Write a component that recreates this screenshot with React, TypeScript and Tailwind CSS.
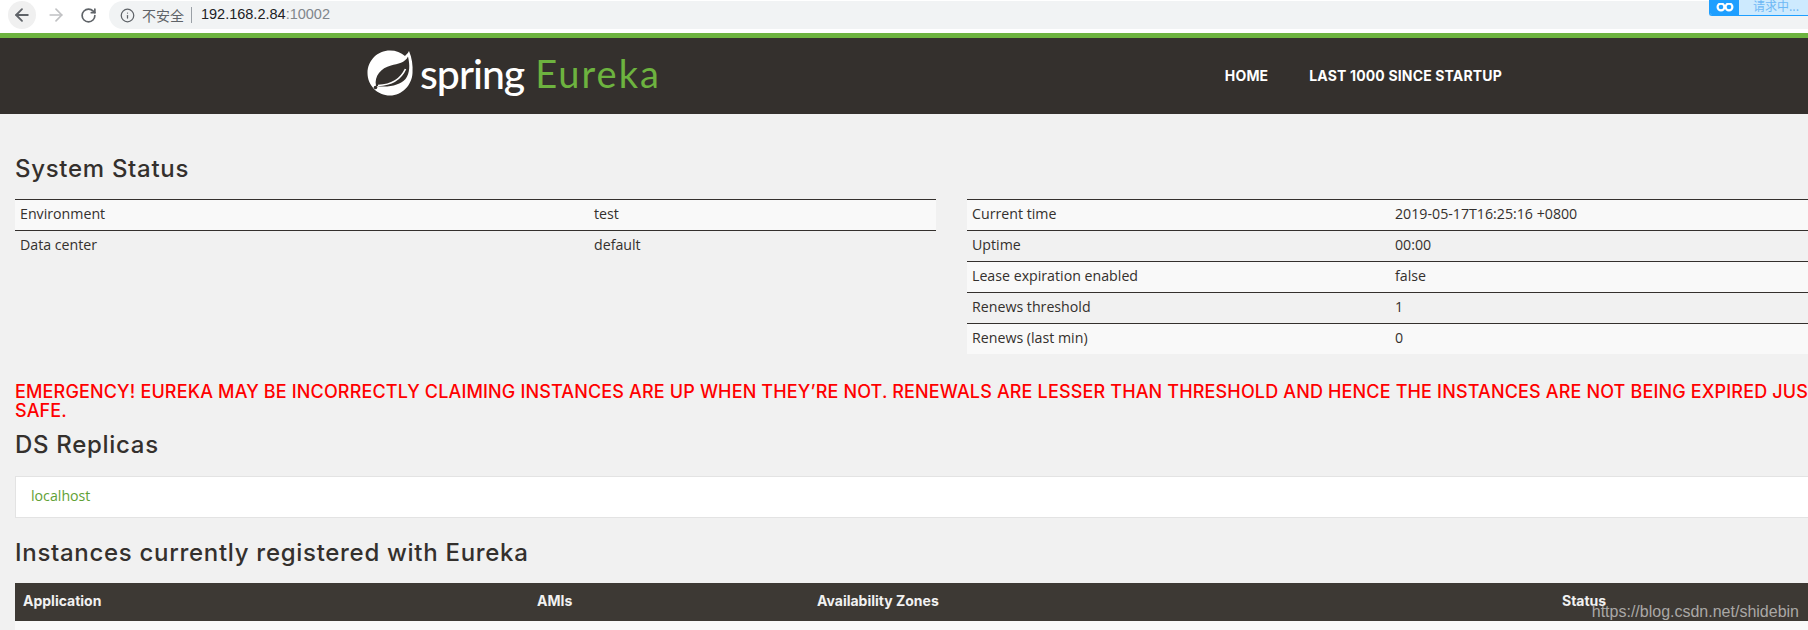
import React from "react";
import { ArrowLeft, ArrowRight, RotateCw, Info } from "lucide-react";

const body = "font-['Open_Sans','Liberation_Sans',sans-serif]";
const head = "font-['Inter','Liberation_Sans',sans-serif]";

function Row({ a, b, odd, w }: { a: string; b: string; odd: boolean; w: string }) {
  return (
    <div className={`flex h-[31px] items-center border-t border-[#34302d] pb-[3px] pl-[5px] ${odd ? "bg-[#f9f9f9]" : ""}`}>
      <div className={`${w} shrink-0`}>{a}</div>
      <div>{b}</div>
    </div>
  );
}

function Logo() {
  return (
    <svg width="46" height="46" viewBox="0 0 46 46" className="shrink-0">
      <path
        fill="#fff"
        d="M23 .5C29 .5 34 2.500 38 6C39.500 4.500 41 3 42 1C45 8 46 15 45.500 23C45 35 35 45.500 23 45.500C10.500 45.500 .5 35.500 .5 23C.5 10.500 10.500 .5 23 .5Z"
      />
      <path
        fill="#34302d"
        d="M9 36C7 26 14 18 24 15.500C31 13.500 38 13 41 6.500C43 15 43 23 38.500 29C33 35 22 38 9 36Z"
      />
      <path fill="none" stroke="#fff" strokeWidth="1.700" d="M11 35.500C22 35 33 31 38.500 19" />
      <circle cx="8.500" cy="37.500" r="1.800" fill="#34302d" />
    </svg>
  );
}

export default function App() {
  return (
    <div className={`relative h-[630px] w-[1808px] overflow-hidden bg-[#f1f1f1] text-[#34302d] ${body}`}>
      <div className="flex h-[33px] items-center gap-[12px] bg-white pb-[3px] pl-[8px] font-['Liberation_Sans','Noto_Sans_CJK_SC',sans-serif]">
        <div className="flex h-[28px] w-[28px] items-center justify-center rounded-full bg-[#f0f0f0]">
          <ArrowLeft size={20} strokeWidth={2.200} className="text-[#5f6368]" />
        </div>
        <ArrowRight size={20} strokeWidth={2} className="-ml-[2px] text-[#c0c1c3]" />
        <RotateCw size={17} strokeWidth={2.400} className="ml-[2px] text-[#5f6368]" />
        <div className="flex h-[28px] w-[1700px] items-center rounded-l-full bg-[#f1f3f4] pl-[11px]">
          <Info size={15} strokeWidth={2} className="text-[#5f6368]" />
          <span className="ml-[7px] font-['Noto_Sans_CJK_SC',sans-serif] text-[14px] text-[#5f6368]">不安全</span>
          <span className="ml-[7px] h-[16px] w-px bg-[#9aa0a6]" />
          <span className="ml-[9px] text-[14.500px] text-[#202124]">192.168.2.84</span>
          <span className="text-[14.500px] text-[#80868b]">:10002</span>
        </div>
      </div>

      <div className="absolute right-0 top-0 flex h-[16px] w-[99px] overflow-hidden rounded-bl-[3px] border-b border-l border-[#1e9fff] font-['Noto_Sans_CJK_SC',sans-serif]">
        <div className="flex w-[29px] items-center justify-center bg-[#1e9fff]">
          <svg width="18" height="10" viewBox="0 0 18 10" fill="none" stroke="#fff" strokeWidth="2.200">
            <circle cx="5" cy="4" r="3.400" />
            <circle cx="13" cy="4" r="3.400" />
          </svg>
        </div>
        <div className="flex flex-1 items-center overflow-hidden bg-[#cdeafe] pl-[14px] text-[12px] leading-none text-[#6db8f5]">
          <span className="-mt-[4px]">请求中...</span>
        </div>
      </div>

      <div className="h-[5px] bg-[#6db33f]" />
      <div className="flex h-[76px] items-center bg-[#34302d] pb-[6px] pl-[367px]">
        <Logo />
        <span className="ml-[7px] font-['Lato',sans-serif] text-[41px] leading-none font-medium tracking-[-1px] text-white">spring</span>
        <span className="ml-[11px] font-['Lato',sans-serif] text-[38px] leading-none tracking-[2px] text-[#6db33f]">Eureka</span>
        <span className={`ml-[564px] mt-[4px] ${head} text-[14px] font-bold tracking-[0.150px] text-white`}>HOME</span>
        <span className={`ml-[41px] mt-[4px] ${head} text-[14px] font-bold tracking-[0.150px] text-white`}>LAST 1000 SINCE STARTUP</span>
      </div>

      <div className="w-[1900px] pl-[15px]">
        <h2 className={`pt-[40px] ${head} text-[24px] leading-[29px] font-medium tracking-[0.700px]`}>System Status</h2>
        <div className="mt-[16px] flex items-start gap-[31px] text-[14.200px]">
          <div className="w-[921px]">
            <Row a="Environment" b="test" odd w="w-[574px]" />
            <Row a="Data center" b="default" odd={false} w="w-[574px]" />
          </div>
          <div className="w-[920px]">
            <Row a="Current time" b="2019-05-17T16:25:16 +0800" odd w="w-[423px]" />
            <Row a="Uptime" b="00:00" odd={false} w="w-[423px]" />
            <Row a="Lease expiration enabled" b="false" odd w="w-[423px]" />
            <Row a="Renews threshold" b="1" odd={false} w="w-[423px]" />
            <Row a="Renews (last min)" b="0" odd w="w-[423px]" />
          </div>
        </div>

        <div className={`mt-[28px] ${head} text-[18px] leading-[19px] font-medium tracking-[0.150px] text-[#ff0000]`}>
          EMERGENCY! EUREKA MAY BE INCORRECTLY CLAIMING INSTANCES ARE UP WHEN THEY’RE NOT. RENEWALS ARE LESSER THAN THRESHOLD AND HENCE THE INSTANCES ARE NOT BEING EXPIRED JUST TO BE
          <br />
          SAFE.
        </div>

        <h2 className={`mt-[10px] ${head} text-[24px] leading-[29px] font-medium tracking-[0.700px]`}>DS Replicas</h2>
        <div className="mt-[17px] flex h-[42px] items-center border border-[#e3e3e3] bg-white pb-[3px] pl-[15px] text-[14.200px] text-[#5fa134]">
          localhost
        </div>

        <h2 className={`mt-[20px] ${head} text-[24px] leading-[29px] font-medium tracking-[0.700px]`}>Instances currently registered with Eureka</h2>
        <div className={`mt-[16px] flex h-[38px] items-center bg-[#3d3934] pb-[4px] pl-[8px] ${head} text-[14px] font-bold text-[#f1f1f1]`}>
          <div className="w-[514px]">Application</div>
          <div className="w-[280px]">AMIs</div>
          <div className="w-[745px]">Availability Zones</div>
          <div>Status</div>
        </div>
        <div className="h-[9px] bg-[#f9f9f9]" />
      </div>

      <div className="absolute bottom-[10px] right-[9px] font-['Liberation_Sans',sans-serif] text-[16px] leading-none text-[#aaa8a6]">
        https://blog.csdn.net/shidebin
      </div>
    </div>
  );
}
